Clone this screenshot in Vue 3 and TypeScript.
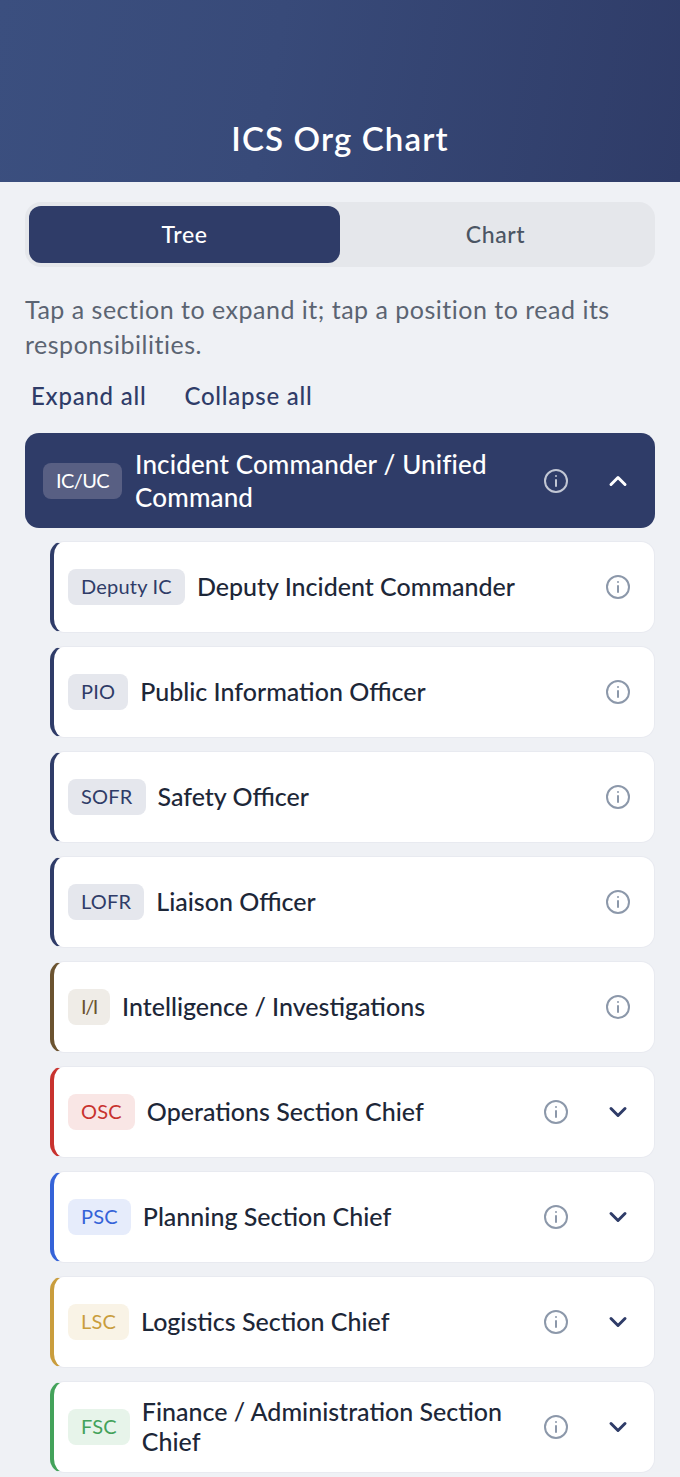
<script setup lang="ts">
import { ref } from 'vue'

interface Position {
  code: string
  name: string
  tone: string
  expandable: boolean
}

const view = ref<'tree' | 'chart'>('tree')

const positions: Position[] = [
  { code: 'Deputy IC', name: 'Deputy Incident Commander', tone: 'navy', expandable: false },
  { code: 'PIO', name: 'Public Information Officer', tone: 'navy', expandable: false },
  { code: 'SOFR', name: 'Safety Officer', tone: 'navy', expandable: false },
  { code: 'LOFR', name: 'Liaison Officer', tone: 'navy', expandable: false },
  { code: 'I/I', name: 'Intelligence / Investigations', tone: 'brown', expandable: false },
  { code: 'OSC', name: 'Operations Section Chief', tone: 'red', expandable: true },
  { code: 'PSC', name: 'Planning Section Chief', tone: 'blue', expandable: true },
  { code: 'LSC', name: 'Logistics Section Chief', tone: 'gold', expandable: true },
  { code: 'FSC', name: 'Finance / Administration Section Chief', tone: 'green', expandable: true },
]
</script>

<template>
  <div class="page">
    <header class="hero"><h1>ICS Org Chart</h1></header>
    <main class="content">
      <div class="segment">
        <button class="seg-btn" :class="{ active: view === 'tree' }" @click="view = 'tree'">Tree</button>
        <button class="seg-btn" :class="{ active: view === 'chart' }" @click="view = 'chart'">Chart</button>
      </div>
      <p class="hint">Tap a section to expand it; tap a position to read its responsibilities.</p>
      <div class="actions">
        <button class="link">Expand all</button>
        <button class="link">Collapse all</button>
      </div>
      <section class="root">
        <span class="chip root-chip slashed">IC/UC</span>
        <span class="root-name">Incident Commander / Unified Command</span>
        <span class="icon-box">
          <svg class="info" viewBox="0 0 24 24"><circle cx="12" cy="12" r="11" /><path d="M12 11v6" /><path d="M12 7v.1" /></svg>
        </span>
        <span class="icon-box">
          <svg class="chev up" viewBox="0 0 24 24"><path d="M5 15.5 12 8.5l7 7" /></svg>
        </span>
      </section>
      <ul class="list">
        <li v-for="p in positions" :key="p.code" class="row" :class="p.tone">
          <span class="chip" :class="{ slashed: p.code.includes('/') }">{{ p.code }}</span>
          <span class="name">{{ p.name }}</span>
          <span class="icon-box">
            <svg class="info" viewBox="0 0 24 24"><circle cx="12" cy="12" r="11" /><path d="M12 11v6" /><path d="M12 7v.1" /></svg>
          </span>
          <span v-if="p.expandable" class="icon-box">
            <svg class="chev" viewBox="0 0 24 24"><path d="M5 8.5l7 7 7-7" /></svg>
          </span>
        </li>
      </ul>
    </main>
  </div>
</template>

<style>
html, body { margin: 0; background: #eff1f5; }
</style>

<style scoped>
.page {
  width: 680px;
  height: 1477px;
  overflow: hidden;
  background: #eff1f5;
  font-family: Lato, "Noto Sans", sans-serif;
  color: #1d2738;
}
.hero {
  height: 182px;
  box-sizing: border-box;
  padding-bottom: 24px;
  display: flex;
  align-items: flex-end;
  justify-content: center;
  background: linear-gradient(100deg, #3b4f7f 0%, #384a79 40%, #2f3c68 100%);
}
h1 {
  margin: 0;
  font-size: 33px;
  line-height: 40px;
  font-weight: 600;
  letter-spacing: 1.15px;
  color: #fff;
}
.content { padding: 20px 25px 0; }
.segment {
  display: flex;
  height: 65px;
  box-sizing: border-box;
  padding: 4px;
  border-radius: 16px;
  background: #e5e7eb;
}
.seg-btn {
  flex: 1;
  border: 0;
  padding: 0 0 2px;
  border-radius: 12px;
  background: transparent;
  font: 500 23px Lato, sans-serif;
  letter-spacing: 0.6px;
  color: #4b5563;
}
.seg-btn.active { background: #2f3c68; color: #fff; }
.hint {
  margin: 25px 0 0;
  font-size: 25px;
  line-height: 35px;
  letter-spacing: 0.5px;
  color: #5b6472;
}
.actions { display: flex; gap: 38px; margin: 18px 0 0 6px; }
.link {
  border: 0;
  padding: 0;
  background: none;
  font: 500 24px/32px Lato, sans-serif;
  letter-spacing: 0.75px;
  color: #2f3c68;
}
.root {
  display: flex;
  align-items: center;
  margin-top: 21px;
  min-height: 95px;
  box-sizing: border-box;
  padding: 0 15px 0 18px;
  border-radius: 14px;
  background: #2f3c68;
  color: #fff;
}
.chip {
  flex: none;
  height: 36px;
  box-sizing: border-box;
  padding: 0 13px 2px;
  display: flex;
  align-items: center;
  border-radius: 8px;
  font-size: 20px;
  letter-spacing: 0.2px;
  margin-right: 12px;
}
.chip.slashed { letter-spacing: -1.4px; }
.root-chip { background: #585f83; color: #fff; margin-right: 13px; }
.chip.root-chip { letter-spacing: -0.6px; }
.root-name, .name {
  flex: 1;
  font-weight: 500;
}
.root-name {
  font-size: 26px;
  line-height: 33px;
  letter-spacing: 0.15px;
}
.name {
  font-size: 25px;
  line-height: 30px;
  letter-spacing: 0;
  padding-bottom: 2px;
  color: #1d2738;
}
.icon-box {
  flex: none;
  width: 44px;
  height: 44px;
  display: flex;
  align-items: center;
  justify-content: center;
}
.icon-box + .icon-box { margin-left: 18px; }
.info {
  width: 24px;
  height: 24px;
  fill: none;
  stroke: #8c98aa;
  stroke-width: 2;
  stroke-linecap: round;
}
.root .info { stroke: #c2c7d4; }
.chev {
  width: 24px;
  height: 24px;
  fill: none;
  stroke: #2f3c68;
  stroke-width: 3;
  stroke-linecap: round;
  stroke-linejoin: round;
}
.chev.up { stroke: #fff; }
.list {
  list-style: none;
  margin: 13px 0 0 25px;
  padding: 0;
  display: flex;
  flex-direction: column;
  gap: 13px;
}
.row {
  display: flex;
  align-items: center;
  height: 92px;
  box-sizing: border-box;
  padding: 0 14px 0 14px;
  border: 1px solid #e8eaf0;
  border-left: 4px solid var(--tone);
  border-radius: 14px;
  background: #fff;
}
.row .chip { background: var(--tint); color: var(--ink); }
.navy { --tone: #2f3c68; --tint: #e5e7ed; --ink: #2f3c68; }
.brown { --tone: #6b5330; --tint: #efece7; --ink: #6b5330; }
.red { --tone: #c8322e; --tint: #f9e6e5; --ink: #c8322e; }
.blue { --tone: #3563d8; --tint: #e6ecfb; --ink: #3563d8; }
.gold { --tone: #c99d3d; --tint: #f9f3e6; --ink: #c99d3d; }
.green { --tone: #43a25a; --tint: #e7f4ea; --ink: #43a25a; }
</style>
